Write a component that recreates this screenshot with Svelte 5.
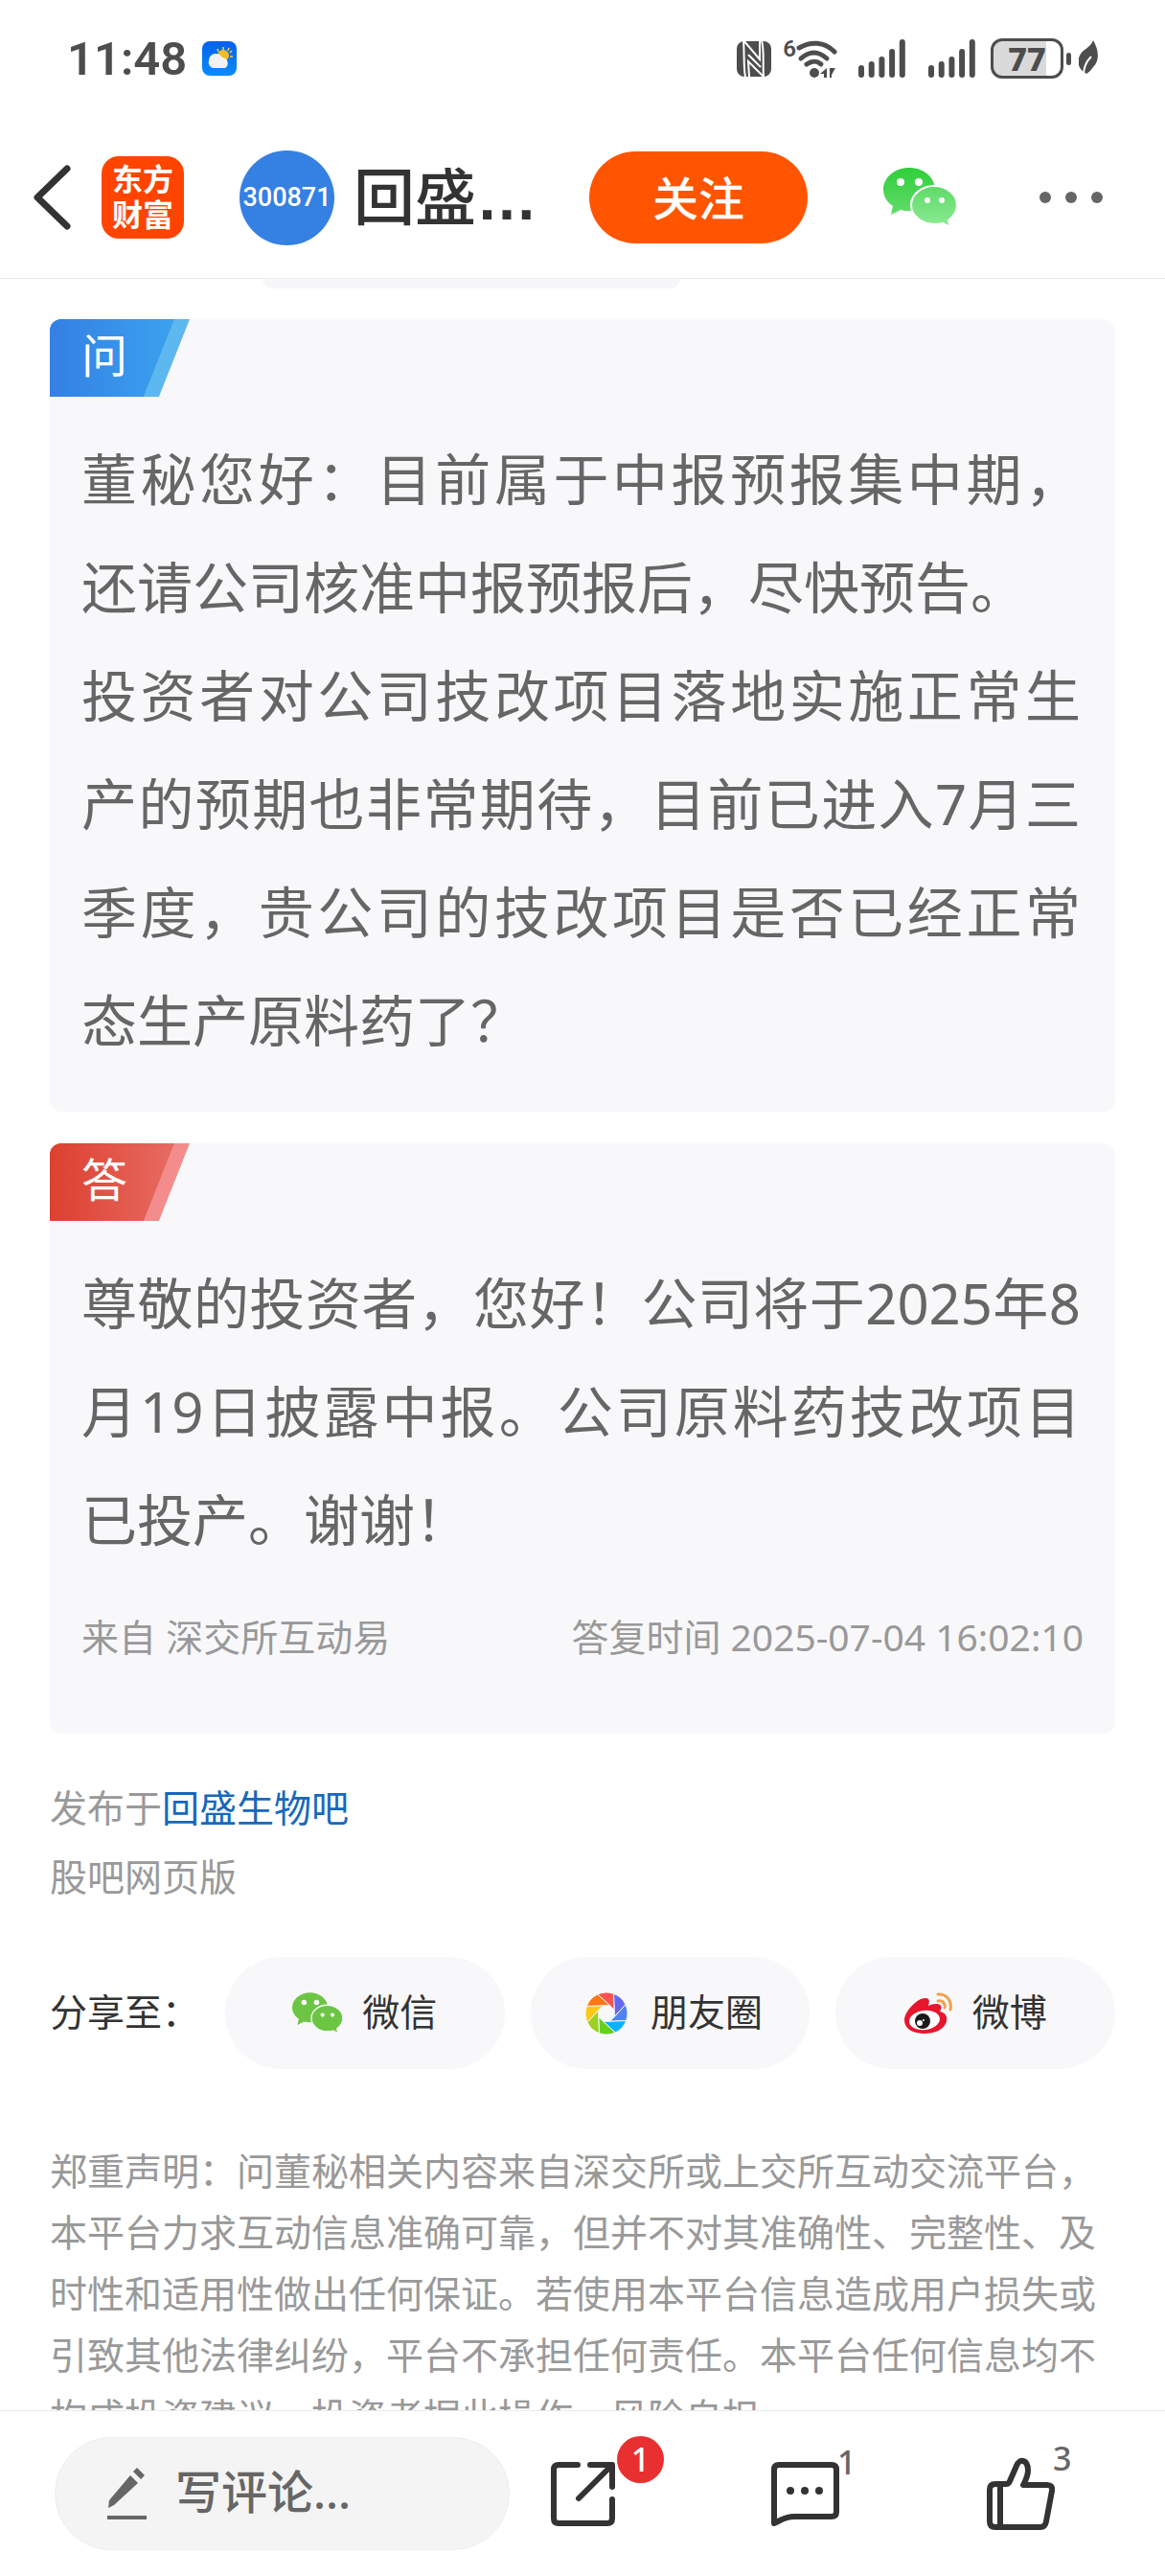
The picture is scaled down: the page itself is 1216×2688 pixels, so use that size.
<script>
  const question = [
    '董秘您好：目前属于中报预报集中期，还请公司核准中报预报后，尽快预告。',
    '投资者对公司技改项目落地实施正常生产的预期也非常期待，目前已进入7月三季度，贵公司的技改项目是否已经正常态生产原料药了？'
  ];
  const answer =
    '尊敬的投资者，您好！公司将于2025年8月19日披露中报。公司原料药技改项目已投产。谢谢！';
  const disclaimer =
    '郑重声明：问董秘相关内容来自深交所或上交所互动交流平台，本平台力求互动信息准确可靠，但并不对其准确性、完整性、及时性和适用性做出任何保证。若使用本平台信息造成用户损失或引致其他法律纠纷，平台不承担任何责任。本平台任何信息均不构成投资建议，投资者据此操作，风险自担。';

  const shareTargets = [
    { id: 'wechat', label: '微信' },
    { id: 'moments', label: '朋友圈' },
    { id: 'weibo', label: '微博' }
  ];

  const signalBars = [13, 17, 22, 30, 40];

  // clockwise, starting with the blade at the top
  const bladeColors = [
    '#fa5452', '#6467f0', '#5283f0', '#07b2ff',
    '#66d020', '#9ad122', '#ffc817', '#ff7612'
  ];

  let comment = $state('');

  function point(radius, degrees) {
    const rad = (degrees * Math.PI) / 180;
    return `${(22 + radius * Math.cos(rad)).toFixed(2)} ${(22 + radius * Math.sin(rad)).toFixed(2)}`;
  }

  function bladePath(index) {
    const turn = index * 45;
    return `M${point(22, turn - 115)} A22 22 0 0 1 ${point(22, turn - 70)} L${point(9, turn - 22)} L${point(9, turn - 67)}Z`;
  }
</script>

{#snippet signal()}
  <svg width="49" height="40" viewBox="0 0 49 40" fill="#4d4d4d" aria-hidden="true">
    {#each signalBars as height, i}
      <rect x={i * 10.7} y={40 - height} width="6" {height} rx="3" />
    {/each}
  </svg>
{/snippet}

{#snippet wechat(width, height, big, small, gap)}
  <svg {width} {height} viewBox="0 0 77 62" aria-hidden="true">
    <path fill={big} d="M27 0C12 0 0 10 0 23c0 7 4 13 10 17L8 49l10-5c3 1 6 1 9 1 15 0 27-9 27-22S42 0 27 0z" />
    <path
      fill={small}
      stroke={gap}
      stroke-width="2"
      d="M53 19c-13 0-24 9-24 20s11 20 24 20c3 0 6 0 9-1l8 4-2-7c5-4 9-9 9-16 0-11-11-20-24-20z"
    />
    <g fill={gap}>
      <circle cx="18" cy="15" r="4" />
      <circle cx="37" cy="15" r="4" />
      <circle cx="46" cy="34" r="3" />
      <circle cx="61" cy="34" r="3" />
    </g>
  </svg>
{/snippet}

<div class="screen">
  <div class="status">
    <span class="time">11:48</span>
    <svg width="36" height="36" viewBox="0 0 36 36" aria-hidden="true">
      <defs>
        <linearGradient id="sky" x1="0" y1="0" x2="0" y2="1">
          <stop offset="0" stop-color="#0560ec" />
          <stop offset="1" stop-color="#0a8cfa" />
        </linearGradient>
      </defs>
      <rect width="36" height="36" rx="8" fill="url(#sky)" />
      <path stroke="#f5d060" stroke-width="1.5" d="M22 6v3M28 7l-1 3M16 8l1 3M31 10l-2 2M29 16h3" />
      <circle cx="22" cy="15" r="6" fill="#f2bd22" />
      <path fill="#f3f3f5" d="M12 28a6 6 0 0 1-5-8 7 7 0 0 1 7-7 8 8 0 0 1 7 4 6 6 0 0 1 3 11z" />
    </svg>
    <div class="status-icons">
      <svg width="36" height="38" viewBox="0 0 36 38" aria-hidden="true">
        <rect width="36" height="37" y="1" rx="8" fill="#4d4d4d" />
        <path fill="none" stroke="#fff" stroke-width="2" d="M9 38C7 30 8 12 7 0l17 20V0" />
        <path fill="none" stroke="#fff" stroke-width="2" d="M26 0c3 12 1 26 2 38L12 22l1 16M12 15l13 13" />
      </svg>
      <div class="wifi">
        <span>6</span>
        <svg width="44" height="41" viewBox="0 0 44 41" aria-hidden="true">
          <g fill="none" stroke="#4d4d4d" stroke-width="5" stroke-linecap="round">
            <path d="M3 9C15 2 29 2 40 13" />
            <path d="M5 20c9-8 18-8 27 0" />
            <path d="M11 26c6-4 10-4 15 0" />
          </g>
          <circle cx="19" cy="35" r="5" fill="#4d4d4d" />
          <path fill="#4d4d4d" d="M32 30v10h-3v-4h-4zM35 40V30h6l-4 7v3z" />
        </svg>
      </div>
      {@render signal()}
      {@render signal()}
      <div class="power">
        <span class="battery">77</span>
        <span class="nub"></span>
        <svg width="20" height="38" viewBox="0 0 20 38" aria-hidden="true">
          <path fill="#4d4d4d" d="M15 0c6 10 7 21 0 28-2 3-4 5-7 7L5 33C-3 27-2 16 6 10c4-3 7-5 9-10z" />
          <path fill="none" stroke="#fff" stroke-width="2" d="M5 36c0-9 3-14 8-19" />
        </svg>
      </div>
    </div>
  </div>

  <header>
    <button class="back" aria-label="返回">
      <svg width="39" height="68" viewBox="0 0 39 68" aria-hidden="true">
        <path d="M35 4L4 34l31 30" fill="none" stroke="#333" stroke-width="7" stroke-linecap="round" stroke-linejoin="round" />
      </svg>
    </button>
    <a class="logo" href="#home">东方<br />财富</a>
    <span class="code">300871</span>
    <h1>回盛<span class="dots">…</span></h1>
    <button class="follow">关注</button>
    <button class="to-wechat" aria-label="分享到微信">
      <svg width="0" height="0" aria-hidden="true">
        <defs>
          <linearGradient id="bubble-big" x1="0" y1="0" x2="0" y2="1">
            <stop offset="0" stop-color="#2fcf3b" />
            <stop offset="1" stop-color="#63db6b" />
          </linearGradient>
          <linearGradient id="bubble-small" x1="0" y1="0" x2="0" y2="1">
            <stop offset="0" stop-color="#5fda68" />
            <stop offset="1" stop-color="#8deb94" />
          </linearGradient>
        </defs>
      </svg>
      {@render wechat(77, 62, 'url(#bubble-big)', 'url(#bubble-small)', '#fff')}
    </button>
    <button class="more" aria-label="更多">
      <svg width="66" height="14" viewBox="0 0 66 14" fill="#666" aria-hidden="true">
        <circle cx="6" cy="7" r="6" />
        <circle cx="33" cy="7" r="6" />
        <circle cx="60" cy="7" r="6" />
      </svg>
    </button>
  </header>

  <main>
    <div class="tab-end"></div>

    <section class="card">
      <div class="tag ask"><span>问</span></div>
      <div class="body">
        {#each question as paragraph}
          <p>{paragraph}</p>
        {/each}
      </div>
    </section>

    <section class="card">
      <div class="tag reply"><span>答</span></div>
      <div class="body">
        <p>{answer}</p>
      </div>
      <div class="meta">
        <span>来自 深交所互动易</span>
        <span>答复时间 2025-07-04 16:02:10</span>
      </div>
    </section>

    <div class="published">
      <div>发布于<a href="#bar">回盛生物吧</a></div>
      <div>股吧网页版</div>
    </div>

    <div class="share">
      <span class="share-label">分享至：</span>
      {#each shareTargets as target}
        <button>
          {#if target.id === 'wechat'}
            {@render wechat(53, 43, '#6cc644', '#6cc644', '#f8f8fa')}
          {:else if target.id === 'moments'}
            <svg class="moments" width="44" height="44" viewBox="0 0 44 44" aria-hidden="true">
              {#each bladeColors as color, i}
                <path d={bladePath(i)} fill={color} stroke="#f8f8fa" stroke-width="1" />
              {/each}
            </svg>
          {:else}
            <svg width="51" height="44" viewBox="0 0 51 44" aria-hidden="true">
              <path
                fill="#e6162d"
                d="M22 6c5 0 4 4 3 8 4-2 11-3 13 0 1 2 0 4-1 6 5 1 8 4 7 10-2 9-13 13-23 13C9 43 0 38 0 29 0 20 13 6 22 6z"
              />
              <ellipse cx="21" cy="29" rx="16" ry="10" fill="#fff" transform="rotate(-7 21 29)" />
              <circle cx="19" cy="30" r="8" fill="#1a1a1a" />
              <circle cx="16" cy="32" r="3" fill="#fff" />
              <circle cx="20" cy="29" r="1" fill="#fff" />
              <path
                d="M35 2c8-1 15 6 13 16M35 9c5-1 8 3 7 7"
                fill="none"
                stroke="#f5a04b"
                stroke-width="3"
                stroke-linecap="round"
              />
            </svg>
          {/if}
          <span>{target.label}</span>
        </button>
      {/each}
    </div>

    <p class="disclaimer">{disclaimer}</p>
  </main>

  <footer>
    <label class="composer">
      <svg width="41" height="55" viewBox="0 0 41 55" fill="#666" aria-hidden="true">
        <path d="M24 8l8 8L7 39l-6 3 1-8zM31 0l8 8-4 4-8-8zM0 50h41v4H0z" />
      </svg>
      <input type="text" placeholder="写评论..." aria-label="写评论" bind:value={comment} />
    </label>
    <div class="actions">
      <button class="wide" aria-label="分享">
        <svg width="68" height="68" viewBox="0 0 68 68" aria-hidden="true">
          <path d="M28 4H8q-5 0-5 5v51q0 5 5 5h51q5 0 5-5V40M41 4h23v23M62 6L29 39" />
        </svg>
        <span class="badge">1</span>
      </button>
      <button aria-label="评论">
        <svg width="71" height="68" viewBox="0 0 71 68" aria-hidden="true">
          <path d="M3 65V9q0-5 5-5h55q5 0 5 5v44q0 5-5 5H24C14 58 10 62 3 65z" />
          <g fill="#333">
            <circle cx="20" cy="31" r="4" />
            <circle cx="35" cy="31" r="4" />
            <circle cx="50" cy="31" r="4" />
          </g>
        </svg>
        <span class="count">1</span>
      </button>
      <button aria-label="点赞">
        <svg width="71" height="76" viewBox="0 0 71 76" aria-hidden="true">
          <path d="M9 28h11q3 0 4-3l7-16C34 1 43 2 43 14c0 6-3 11-5 15h25q6 0 5 6l-6 32q-1 6-6 6H9q-6 0-6-6V34q0-6 6-6zM14 28v45" />
        </svg>
        <span class="count">3</span>
      </button>
    </div>
  </footer>
</div>

<style>
  :global(body) {
    background: #fff;
  }

  .screen {
    display: flex;
    flex-direction: column;
    height: 100vh;
    overflow: hidden;
    font-family: 'Noto Sans', 'Noto Sans CJK SC', sans-serif;
    color: #333;
  }

  svg {
    display: block;
    flex: none;
  }

  p,
  h1 {
    margin: 0;
  }

  a {
    color: inherit;
    text-decoration: none;
  }

  button {
    padding: 0;
    border: none;
    background: none;
    font-family: inherit;
    color: inherit;
    cursor: pointer;
  }

  .status {
    display: flex;
    align-items: center;
    gap: 16px;
    height: 122px;
    padding: 0 70px 0 70px;
    box-sizing: border-box;
    color: #4d4d4d;
  }

  .time {
    font-family: Roboto, sans-serif;
    font-size: 49px;
    font-weight: 600;
  }

  .status-icons {
    display: flex;
    align-items: center;
    gap: 24px;
    margin-left: auto;
  }

  .wifi {
    display: flex;
    margin: 0 -3px 0 -12px;
  }

  .wifi span {
    font-family: Roboto, sans-serif;
    font-size: 24px;
    line-height: 20px;
    font-weight: 600;
  }

  .power {
    display: flex;
    align-items: center;
    gap: 3px;
    margin-left: -8px;
  }

  .battery {
    width: 76px;
    height: 42px;
    box-sizing: border-box;
    border: 3px solid #4d4d4d;
    border-radius: 12px;
    background: linear-gradient(90deg, #dadada 78%, #fff 78%);
    font-size: 34px;
    line-height: 36px;
    font-weight: 800;
    text-align: center;
  }

  .nub {
    width: 5px;
    height: 13px;
    margin-right: 5px;
    border-radius: 3px;
    background: #4d4d4d;
  }

  header {
    display: flex;
    align-items: center;
    flex: none;
    height: 169px;
    padding: 0 65px 0 35px;
    box-sizing: border-box;
    border-bottom: 1px solid #eaeaea;
  }

  .logo {
    width: 86px;
    height: 86px;
    margin: 0 58px 0 32px;
    padding-top: 5px;
    box-sizing: border-box;
    border-radius: 18px;
    background: #ff4400;
    color: #fff;
    font-size: 32px;
    line-height: 37px;
    font-weight: 700;
    text-align: center;
  }

  .code {
    width: 99px;
    border-radius: 50%;
    background: #3480e3;
    color: #fff;
    font-family: Roboto, sans-serif;
    font-size: 27px;
    line-height: 99px;
    font-weight: 500;
    text-align: center;
  }

  h1 {
    flex: 1;
    margin-left: 20px;
    font-size: 64px;
    line-height: 90px;
    font-weight: 500;
    white-space: nowrap;
  }

  .dots {
    font-family: 'Liberation Sans', sans-serif;
    font-weight: 700;
  }

  .follow {
    width: 228px;
    height: 96px;
    padding-bottom: 4px;
    border-radius: 48px;
    background: #ff5500;
    color: #fff;
    font-size: 48px;
    font-weight: 500;
  }

  .to-wechat {
    margin: 0 86px 0 79px;
  }

  main {
    flex: 1;
    min-height: 0;
    overflow: hidden;
    padding: 0 52px;
  }

  .tab-end {
    width: 436px;
    height: 10px;
    margin: 0 222px 32px;
    border-radius: 0 0 12px 12px;
    background: #f7f7f9;
  }

  .card {
    margin-bottom: 33px;
    padding-bottom: 39px;
    border-radius: 12px;
    background: #f8f8fa;
    overflow: hidden;
  }

  .tag {
    width: 146px;
    height: 81px;
    clip-path: polygon(0 0, 100% 0, 78% 100%, 0 100%);
    color: #fff;
    font-size: 48px;
    line-height: 76px;
  }

  .tag span {
    display: block;
    height: 81px;
    padding-left: 33px;
    clip-path: polygon(0 0, 89% 0, 67% 100%, 0 100%);
  }

  .ask {
    background: #5cb8ee;
  }

  .ask span {
    background: linear-gradient(90deg, #3480e3, #3ba6f0);
  }

  .reply {
    background: #f38c8c;
  }

  .reply span {
    background: linear-gradient(90deg, #dd4030, #e87068);
  }

  .body {
    padding: 29px 36px 0 33px;
    color: #666;
    font-size: 58px;
    line-height: 113px;
    text-align: justify;
  }

  .meta {
    display: flex;
    justify-content: space-between;
    margin: 36px 33px 32px;
    color: #999;
    font-size: 39px;
    line-height: 60px;
  }

  .published {
    margin-top: 41px;
    color: #999;
    font-size: 39px;
    line-height: 72px;
  }

  .published a {
    color: #1668bd;
  }

  .share {
    display: flex;
    align-items: center;
    gap: 27px;
    margin-top: 48px;
    font-size: 39px;
  }

  .share span {
    padding-bottom: 8px;
    white-space: nowrap;
  }

  .share button {
    display: flex;
    flex: 1 1 0;
    align-items: center;
    justify-content: center;
    gap: 20px;
    height: 117px;
    border-radius: 59px;
    background: #f8f8fa;
    font-size: 39px;
  }

  .moments {
    margin: 0 4px 0 8px;
  }

  .disclaimer {
    margin-top: 74px;
    color: #999;
    font-size: 39px;
    line-height: 64px;
  }

  footer {
    display: flex;
    align-items: center;
    flex: none;
    height: 173px;
    padding: 0 115px 0 57px;
    box-sizing: border-box;
    border-top: 1px solid #eaeaea;
    background: #fff;
  }

  .composer {
    display: flex;
    align-items: center;
    gap: 30px;
    width: 475px;
    height: 118px;
    padding: 0 54px;
    box-sizing: border-box;
    border: 1px solid #eee;
    border-radius: 59px;
    background: #f4f4f4;
  }

  input {
    width: 100%;
    min-width: 0;
    padding: 0 0 6px;
    border: none;
    outline: none;
    background: none;
    color: #666;
    font-family: inherit;
    font-size: 48px;
    font-weight: 500;
  }

  input::placeholder {
    color: #666;
    opacity: 1;
  }

  .actions {
    display: flex;
    flex: 1;
    align-items: center;
    justify-content: space-between;
    margin-left: 43px;
  }

  .actions button {
    position: relative;
  }

  .actions .wide {
    width: 76px;
  }

  .actions path {
    fill: none;
    stroke: #333;
    stroke-width: 6;
    stroke-linecap: round;
    stroke-linejoin: round;
  }

  .badge {
    position: absolute;
    top: -26px;
    left: 69px;
    width: 49px;
    border-radius: 50%;
    background: #e83030;
    color: #fff;
    font-size: 34px;
    line-height: 49px;
    font-weight: 500;
  }

  .count {
    position: absolute;
    top: -23px;
    left: 69px;
    color: #666;
    font-size: 34px;
    line-height: 49px;
    font-weight: 500;
  }
</style>
